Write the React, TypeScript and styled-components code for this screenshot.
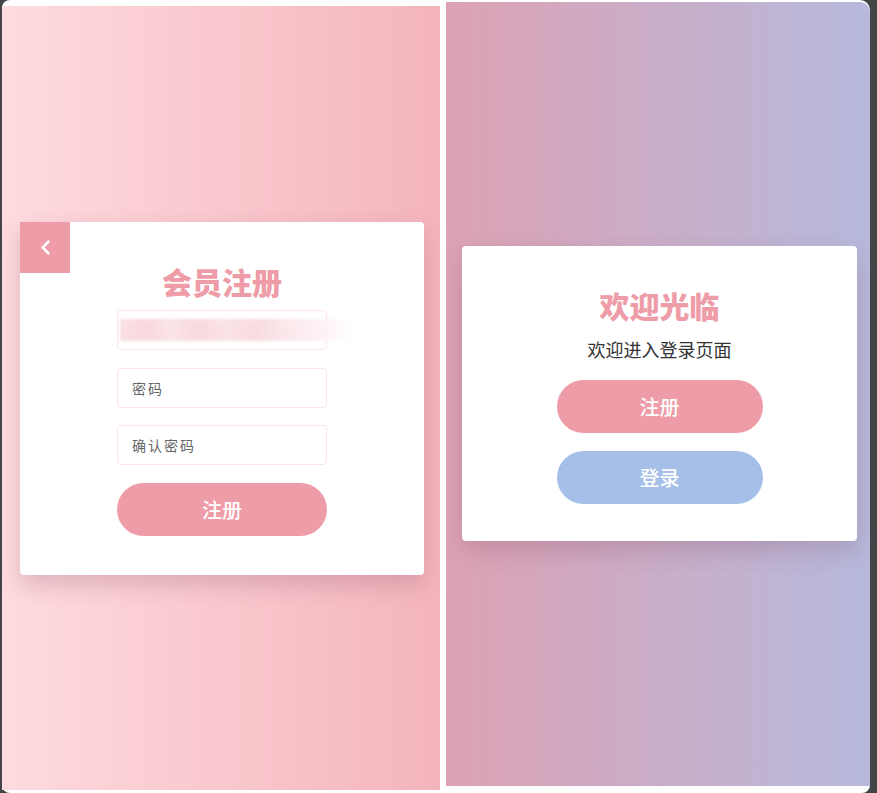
import styled, { createGlobalStyle } from 'styled-components';
import { FaChevronLeft } from 'react-icons/fa';

const GlobalStyle = createGlobalStyle`
  html, body {
    margin: 0;
    padding: 0;
    background: #434547;
    font-family: "Noto Sans CJK SC", "Noto Sans", sans-serif;
  }
`;

const Page = styled.div`
  width: 877px;
  height: 793px;
  background: #434547;
  overflow: hidden;
`;

const Shell = styled.div`
  margin-left: 2px;
  width: 868px;
  height: 793px;
  background: #fff;
  border-radius: 8px 10px 8px 8px;
  display: flex;
  align-items: flex-start;
  gap: 6px;
`;

const LeftPanel = styled.div`
  margin-top: 6px;
  width: 438px;
  height: 784px;
  background: linear-gradient(to right, #fedbdf, #f4b4bc);
  display: flex;
  align-items: center;
  padding: 0 16px 0 18px;
  box-sizing: border-box;
`;

const RightPanel = styled.div`
  margin-top: 2px;
  width: 424px;
  height: 784px;
  border-top-right-radius: 10px;
  background: linear-gradient(to right, #dda2b4, #b6b9dc);
  display: flex;
  align-items: center;
  padding: 0 13px 0 16px;
  box-sizing: border-box;
`;

const Card = styled.div<{ $top: number; $bottom: number }>`
  position: relative;
  width: 100%;
  margin-top: ${(p) => p.$top}px;
  background: #fff;
  border-radius: 4px;
  box-shadow: 0 10px 22px rgba(120, 60, 80, 0.22);
  display: flex;
  flex-direction: column;
  align-items: center;
  padding: 39px 0 ${(p) => p.$bottom}px;
`;

const BackButton = styled.button`
  position: absolute;
  top: 0;
  left: 0;
  width: 50px;
  height: 51px;
  border: none;
  background: #ee9ca7;
  color: #fff;
  display: flex;
  align-items: center;
  justify-content: center;
  padding: 0;
  cursor: pointer;
`;

const Title = styled.h2`
  margin: 0;
  font-size: 30px;
  line-height: 40px;
  font-weight: 900;
  color: #ee9ca7;
`;

const SubTitle = styled.p`
  margin: 12px 0 0;
  font-size: 18px;
  line-height: 24px;
  color: #333;
`;

const Field = styled.div<{ $gap: number }>`
  position: relative;
  margin-top: ${(p) => p.$gap}px;
  width: 210px;
  height: 40px;
  box-sizing: border-box;
  border: 1px solid #fbe5e9;
  border-radius: 4px;
  display: flex;
  align-items: center;
  padding-left: 14px;
  font-size: 14px;
  letter-spacing: 2px;
  color: #666;
`;

const Redacted = styled.div`
  position: absolute;
  left: 2px;
  top: 8px;
  width: 232px;
  height: 22px;
  background: linear-gradient(
    to right,
    #fae0e5 0%,
    #f8d8de 12%,
    #fbe4e8 22%,
    #f7d9df 34%,
    #fbe3e8 46%,
    #f8dbe1 58%,
    #fbe8ec 72%,
    #fdf1f3 86%,
    rgba(255, 255, 255, 0) 100%
  );
  filter: blur(1.5px);
`;

const PillButton = styled.button<{ $color: string; $gap: number; $width: number }>`
  margin-top: ${(p) => p.$gap}px;
  width: ${(p) => p.$width}px;
  height: 53px;
  border: none;
  border-radius: 27px;
  background: ${(p) => p.$color};
  color: #fff;
  font-family: inherit;
  font-size: 20px;
  font-weight: 500;
  cursor: pointer;
`;

export default function App() {
  return (
    <>
      <GlobalStyle />
      <Page>
        <Shell>
          <LeftPanel>
            <Card $top={1} $bottom={39}>
              <BackButton aria-label="back">
                <FaChevronLeft size={17} />
              </BackButton>
              <Title>会员注册</Title>
              <Field $gap={9}>
                <Redacted />
              </Field>
              <Field $gap={18}>密码</Field>
              <Field $gap={17}>确认密码</Field>
              <PillButton $color="#ee9ca7" $gap={18} $width={210}>
                注册
              </PillButton>
            </Card>
          </LeftPanel>
          <RightPanel>
            <Card $top={-1} $bottom={37}>
              <Title>欢迎光临</Title>
              <SubTitle>欢迎进入登录页面</SubTitle>
              <PillButton $color="#ee9ca7" $gap={19} $width={206}>
                注册
              </PillButton>
              <PillButton $color="#a6bfe9" $gap={18} $width={206}>
                登录
              </PillButton>
            </Card>
          </RightPanel>
        </Shell>
      </Page>
    </>
  );
}
